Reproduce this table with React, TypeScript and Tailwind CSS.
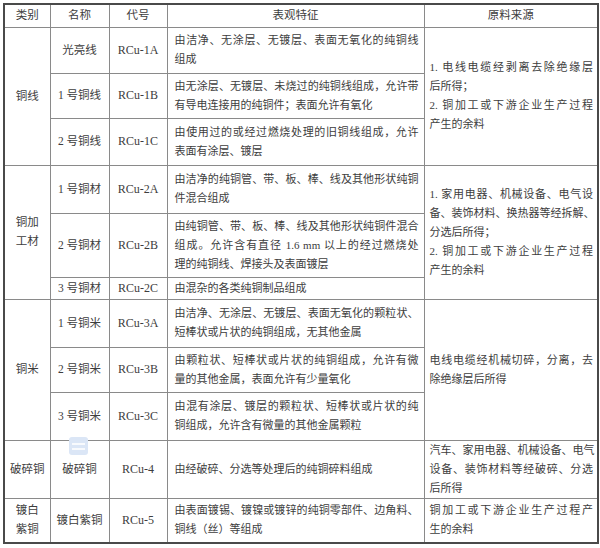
import React from 'react';

type Row = {
  name: string;
  code: string;
  desc: string[][];
  h: number;
};

type Group = {
  cat: string[];
  source: string[][];
  rows: Row[];
};

// every inner array is one paragraph, split at the reference's line breaks
const groups: Group[] = [
  {
    cat: ['铜线'],
    source: [['1. 电线电缆经剥离去除绝缘层', '后所得；'], ['2. 铜加工或下游企业生产过程', '产生的余料']],
    rows: [
      { name: '光亮线', code: 'RCu-1A', desc: [['由洁净、无涂层、无镀层、表面无氧化的纯铜线', '组成']], h: 46 },
      { name: '1 号铜线', code: 'RCu-1B', desc: [['由无涂层、无镀层、未烧过的纯铜线组成，允许带', '有导电连接用的纯铜件；表面允许有氧化']], h: 45 },
      { name: '2 号铜线', code: 'RCu-1C', desc: [['由使用过的或经过燃烧处理的旧铜线组成，允许', '表面有涂层、镀层']], h: 47 },
    ],
  },
  {
    cat: ['铜加', '工材'],
    source: [
      ['1. 家用电器、机械设备、电气设', '备、装饰材料、换热器等经拆解、', '分选后所得；'],
      ['2. 铜加工或下游企业生产过程', '产生的余料'],
    ],
    rows: [
      { name: '1 号铜材', code: 'RCu-2A', desc: [['由洁净的纯铜管、带、板、棒、线及其他形状纯铜', '件混合组成']], h: 48 },
      { name: '2 号铜材', code: 'RCu-2B', desc: [['由纯铜管、带、板、棒、线及其他形状纯铜件混合', '组成。允许含有直径 1.6 mm 以上的经过燃烧处', '理的纯铜线、焊接头及表面镀层']], h: 64 },
      { name: '3 号铜材', code: 'RCu-2C', desc: [['由混杂的各类纯铜制品组成']], h: 22 },
    ],
  },
  {
    cat: ['铜米'],
    source: [['电线电缆经机械切碎，分离，去', '除绝缘层后所得']],
    rows: [
      { name: '1 号铜米', code: 'RCu-3A', desc: [['由洁净、无涂层、无镀层、表面无氧化的颗粒状、', '短棒状或片状的纯铜组成，无其他金属']], h: 48 },
      { name: '2 号铜米', code: 'RCu-3B', desc: [['由颗粒状、短棒状或片状的纯铜组成，允许有微', '量的其他金属，表面允许有少量氧化']], h: 45 },
      { name: '3 号铜米', code: 'RCu-3C', desc: [['由混有涂层、镀层的颗粒状、短棒状或片状的纯', '铜组成，允许含有微量的其他金属颗粒']], h: 48 },
    ],
  },
  {
    cat: ['破碎铜'],
    source: [['汽车、家用电器、机械设备、电气', '设备、装饰材料等经破碎、分选', '后所得']],
    rows: [{ name: '破碎铜', code: 'RCu-4', desc: [['由经破碎、分选等处理后的纯铜碎料组成']], h: 58 }],
  },
  {
    cat: ['镀白', '紫铜'],
    source: [['铜加工或下游企业生产过程产', '生的余料']],
    rows: [
      { name: '镀白紫铜', code: 'RCu-5', desc: [['由表面镀锡、镀镍或镀锌的纯铜零部件、边角料、', '铜线（丝）等组成']], h: 45 },
    ],
  },
];

const Paras = ({ paras }: { paras: string[][] }) => (
  <>
    {paras.map((lines, p) =>
      lines.map((l, i) => (
        <div
          key={`${p}-${i}`}
          className={
            i < lines.length - 1
              ? 'whitespace-nowrap text-justify [text-align-last:justify]'
              : 'whitespace-nowrap text-left'
          }
        >
          {l}
        </div>
      ))
    )}
  </>
);

const cell = 'border border-[#8a8a8a] align-middle p-0';

export default function App() {
  return (
    <div className="bg-white w-[600px] h-[548px] pl-[3px] pt-[3px] font-['Liberation_Serif','Noto_Sans_CJK_SC',serif] text-[#3d3d3d]">
      <div className="relative w-[594px]">
        <table className="w-[594px] table-fixed border-collapse border-2 border-[#4a4a4a]">
          <colgroup>
            <col className="w-[46px]" />
            <col className="w-[59px]" />
            <col className="w-[58px]" />
            <col className="w-[257px]" />
            <col className="w-[174px]" />
          </colgroup>
          <thead>
            <tr className="h-[23px] text-[11.5px] leading-[19px]">
              <th className={`${cell} font-normal text-center`}>类别</th>
              <th className={`${cell} font-normal text-center`}>名称</th>
              <th className={`${cell} font-normal text-center`}>代号</th>
              <th className={`${cell} font-normal text-center`}>表观特征</th>
              <th className={`${cell} font-normal text-center`}>原料来源</th>
            </tr>
          </thead>
          <tbody>
            {groups.map((g) =>
              g.rows.map((r, i) => (
                <tr key={r.code} style={{ height: r.h }} className="leading-[19px]">
                  {i === 0 && (
                    <td rowSpan={g.rows.length} className={`${cell} text-center text-[11.5px]`}>
                      {g.cat.map((c) => (
                        <div key={c}>{c}</div>
                      ))}
                    </td>
                  )}
                  <td className={`${cell} text-center text-[11.5px] whitespace-nowrap`}>{r.name}</td>
                  <td className={`${cell} text-center text-[12px]`}>{r.code}</td>
                  <td className={`${cell} text-[11px] pl-[7px] pr-[5px]`}>
                    <Paras paras={r.desc} />
                  </td>
                  {i === 0 && (
                    <td rowSpan={g.rows.length} className={`${cell} text-[11px] pl-[5px] pr-[4px]`}>
                      <Paras paras={g.source} />
                    </td>
                  )}
                </tr>
              ))
            )}
          </tbody>
        </table>
        {/* faint watermark blob from the scan */}
        <div className="absolute left-[66px] top-[434px] w-[19px] h-[18px] rounded-[3px] bg-[#dbe6f6] flex flex-col justify-center gap-[3px] px-[3px]">
          <div className="h-[2px] bg-white/80" />
          <div className="h-[2px] bg-white/80" />
        </div>
      </div>
    </div>
  );
}
